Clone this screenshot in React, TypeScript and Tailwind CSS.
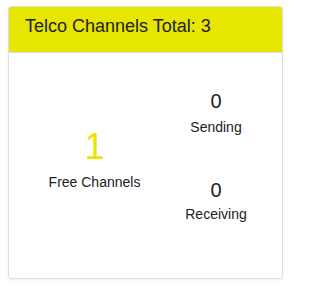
export default function App() {
  return (
    <div className="w-[291px] h-[288px] bg-white pt-[6px] pl-2 font-['Liberation_Sans',Arial,sans-serif] text-[#212121]">
      <div className="w-[275px] h-[273px] border border-[#dedede] rounded-[3px] shadow-[0_1px_2px_rgba(0,0,0,0.08)] overflow-hidden flex flex-col">
        <div className="h-[46px] bg-[#e6e600] border-b border-[#dedede] px-4 pt-[6px] text-[18px] leading-[27px]">
          Telco Channels Total: 3
        </div>
        <div className="flex-1 grid grid-cols-[171px_72px] items-start pt-[36px]">
          <div className="flex flex-col items-center pt-[38px]">
            <div className="text-[36px] leading-[40px] text-[#e6e600]">1</div>
            <div className="mt-[5px] text-[14px] leading-[20px]">Free Channels</div>
          </div>
          <div className="flex flex-col items-center">
            <div className="flex flex-col items-center">
              <div className="text-[20px] leading-[24px]">0</div>
              <div className="mt-1 text-[14px] leading-[20px]">Sending</div>
            </div>
            <div className="mt-[41px] flex flex-col items-center">
              <div className="text-[20px] leading-[24px]">0</div>
              <div className="mt-[2px] text-[14px] leading-[20px]">Receiving</div>
            </div>
          </div>
        </div>
      </div>
    </div>
  );
}
